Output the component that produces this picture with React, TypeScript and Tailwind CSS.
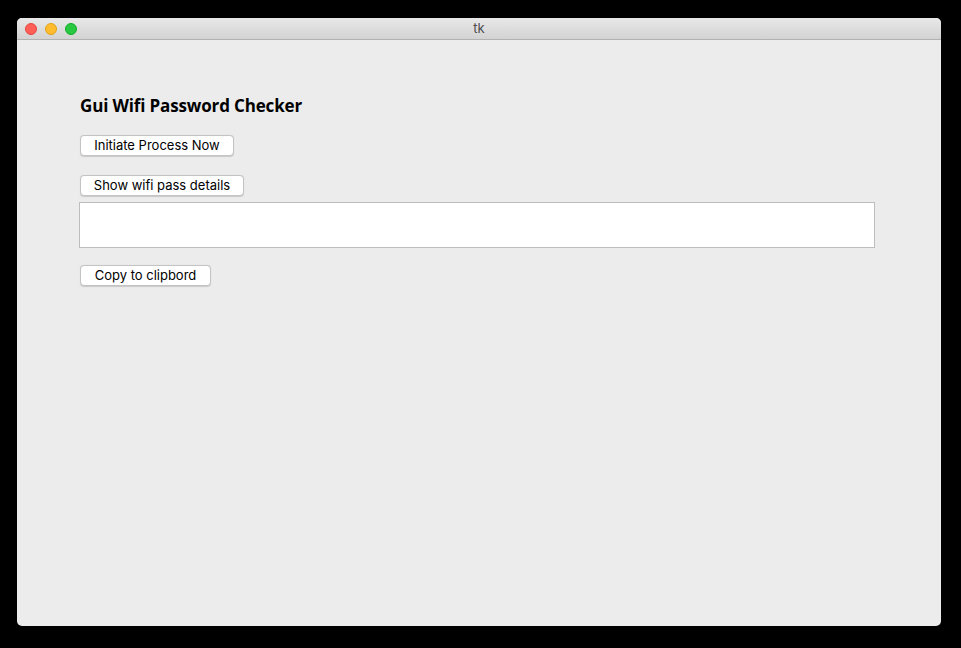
function Btn({ label, w, mt }: { label: string; w: string; mt: string }) {
  return (
    <button
      className={`ml-[1px] ${mt} block h-[21px] ${w} rounded-[4px] border border-[#c3c3c3] bg-white font-['Inter',sans-serif] text-[13px] leading-none text-black shadow-[0_0.5px_1px_rgba(0,0,0,0.15)]`}
    >
      {label}
    </button>
  );
}

export default function App() {
  return (
    <div className="h-[648px] w-[961px] bg-black pl-[17px] pt-[18px] font-['Liberation_Sans',sans-serif]">
      <div className="flex h-[608px] w-[924px] flex-col overflow-hidden rounded-[5px] bg-[#ececec]">
        <div className="relative flex h-[22px] items-center justify-center border-b border-[#b2b2b2] bg-gradient-to-b from-[#e8e8e8] to-[#d3d3d3]">
          <div className="absolute left-[8px] top-[5px] flex gap-[8px]">
            <span className="h-[12px] w-[12px] rounded-full border border-[#e2463f] bg-[#ff5f57]" />
            <span className="h-[12px] w-[12px] rounded-full border border-[#e1a116] bg-[#febc2e]" />
            <span className="h-[12px] w-[12px] rounded-full border border-[#12ac28] bg-[#28c840]" />
          </div>
          <span className="font-['Inter',sans-serif] text-[13px] text-[#4d4d4d]">tk</span>
        </div>
        <div className="flex flex-col items-start pl-[62px] pt-[55px]">
          <h1 className="ml-[1px] font-['Open_Sans',sans-serif] text-[17px] font-bold leading-[22px] tracking-[-0.15px] text-black">
            Gui Wifi Password Checker
          </h1>
          <Btn label="Initiate Process Now" w="w-[154px]" mt="mt-[18px]" />
          <Btn label="Show wifi pass details" w="w-[164px]" mt="mt-[19px]" />
          <div className="mt-[6px] h-[46px] w-[796px] border border-[#bdbdbd] bg-white" />
          <Btn label="Copy to clipbord" w="w-[131px]" mt="mt-[17px]" />
        </div>
      </div>
    </div>
  );
}
